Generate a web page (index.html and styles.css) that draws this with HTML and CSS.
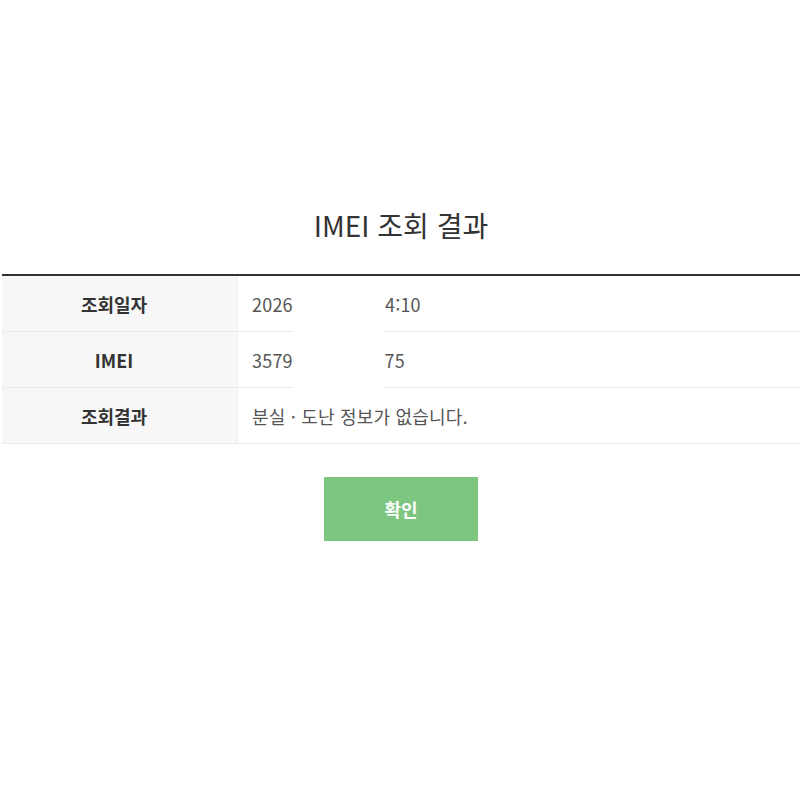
FILE: index.html
```html
<!DOCTYPE html>
<html lang="ko">
<head>
<meta charset="utf-8">
<title>IMEI 조회 결과</title>
<link rel="stylesheet" href="styles.css">
</head>
<body>
<div class="page">
  <h1 class="title">IMEI 조회 결과</h1>
  <div class="table-wrap">
    <table class="result">
      <tr>
        <th>조회일자</th>
        <td>2026.01.01 10:14:10</td>
      </tr>
      <tr>
        <th>IMEI</th>
        <td>357900000000075</td>
      </tr>
      <tr>
        <th>조회결과</th>
        <td>분실 · 도난 정보가 없습니다.</td>
      </tr>
    </table>
    <div class="mask"></div>
  </div>
  <div class="actions">
    <button class="btn-ok" type="button">확인</button>
  </div>
</div>
</body>
</html>
```

FILE: styles.css
```css
html, body {
  margin: 0;
  padding: 0;
  background: #fff;
}
body {
  font-family: "Noto Sans CJK KR", "Noto Sans", sans-serif;
  color: #333;
}
.page {
  padding-top: 205px;
  padding-left: 2px;
}
.title {
  margin: 0;
  text-align: center;
  font-size: 28px;
  font-weight: 400;
  line-height: 40px;
  color: #333;
}
.table-wrap {
  position: relative;
  margin-top: 29px;
}
.result {
  width: 100%;
  border-collapse: collapse;
  border-top: 2px solid #333;
}
.result th,
.result td {
  height: 55px;
  padding: 0;
  border-bottom: 1px solid #ebebeb;
  font-size: 18px;
  vertical-align: middle;
}
.result th {
  width: 224px;
  padding-right: 11px;
  background: #f7f7f7;
  border-right: 1px solid #f0f0f0;
  font-weight: 700;
  color: #333;
  text-align: center;
}
.result td {
  padding-left: 14px;
  color: #555;
  text-align: left;
  letter-spacing: 0.2px;
}
.mask {
  position: absolute;
  left: 291px;
  top: 3px;
  width: 92px;
  height: 112px;
  background: #fff;
}
.actions {
  display: flex;
  justify-content: center;
  margin-top: 33px;
}
.btn-ok {
  width: 154px;
  height: 64px;
  border: 0;
  background: #7dc67f;
  color: #fff;
  font-family: inherit;
  font-size: 18px;
  font-weight: 700;
  cursor: pointer;
}
```
